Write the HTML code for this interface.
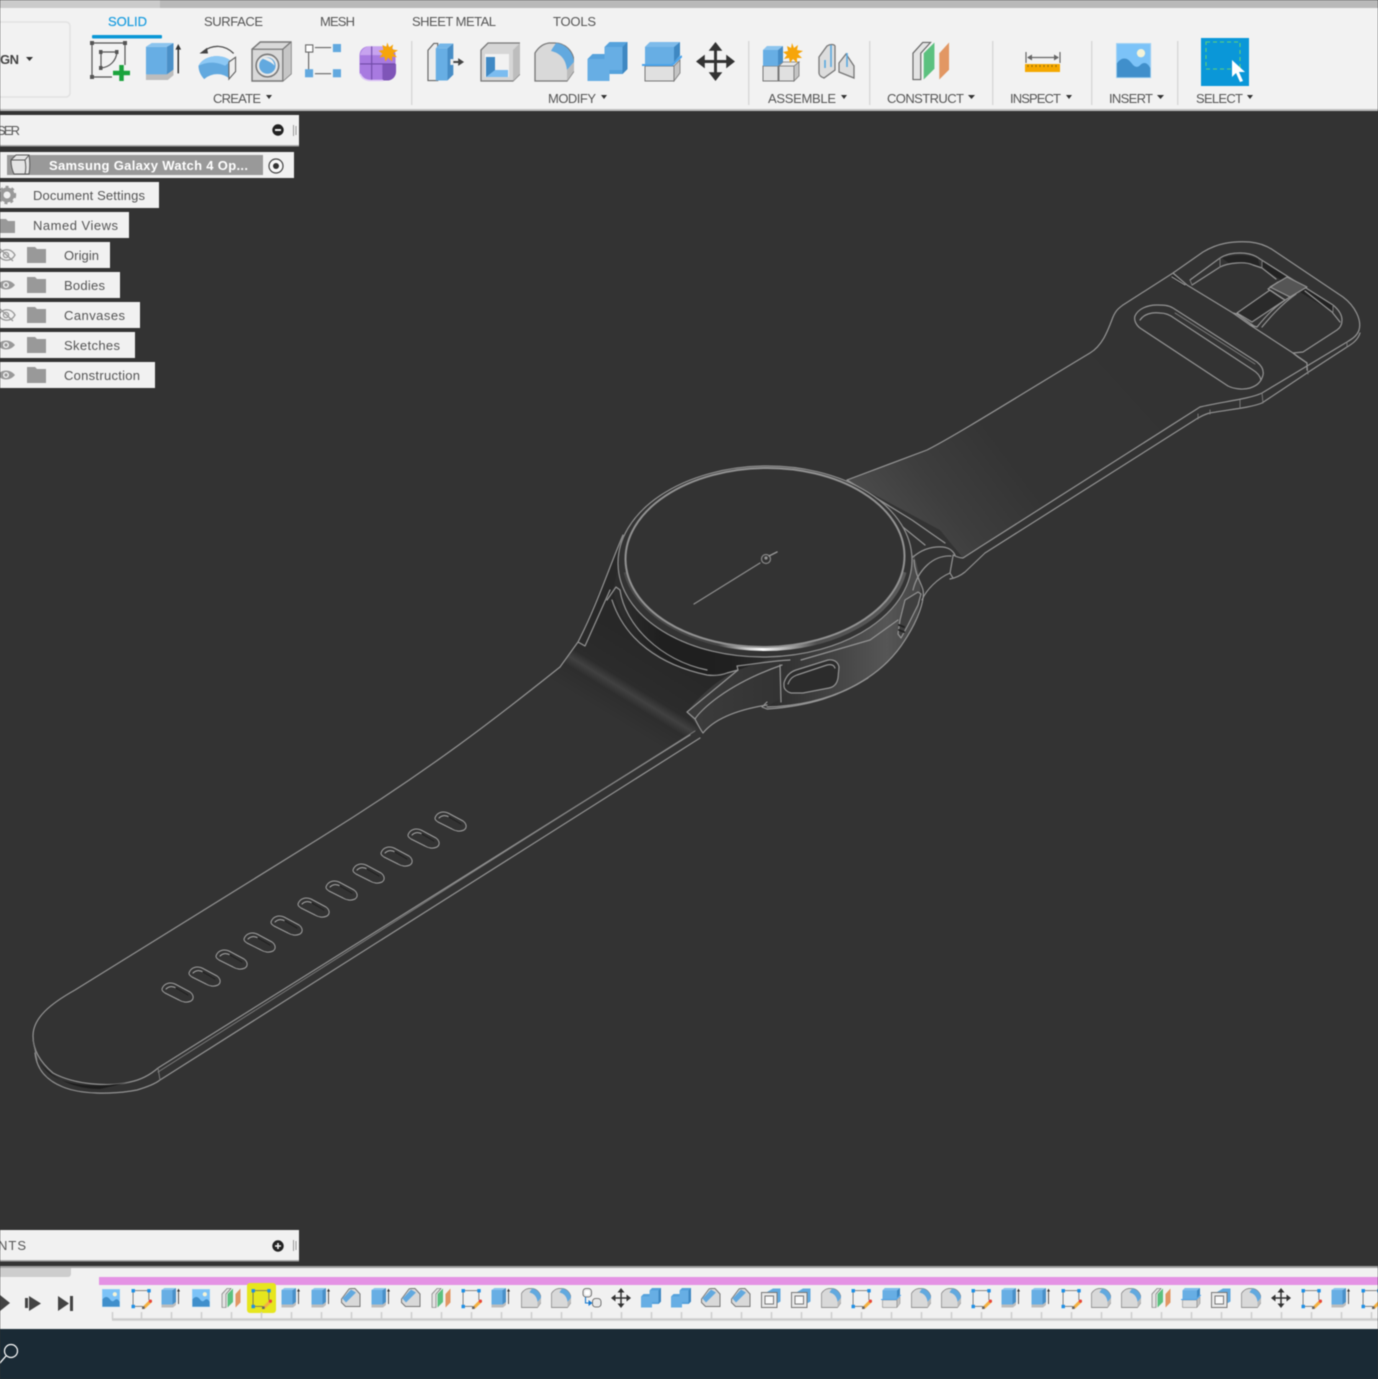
<!DOCTYPE html>
<html lang="en"><head><meta charset="utf-8"><title>Samsung Galaxy Watch 4</title>
<style>
html,body{margin:0;padding:0;width:1378px;height:1379px;overflow:hidden;background:#333}
svg{display:block;position:absolute;left:0;top:0;filter:blur(.45px)}
text{font-family:"Liberation Sans",sans-serif;font-size:13px;fill:#555}
.w{fill:none;stroke:#949494;stroke-width:1.2;stroke-linejoin:round;stroke-linecap:round}
.t{stroke:#808080;stroke-width:.9}
</style></head><body>
<svg width="1378" height="1379" viewBox="0 0 1378 1379" xmlns="http://www.w3.org/2000/svg">
<defs>
<linearGradient id="gBody" x1="620" x2="910" y1="0" y2="0" gradientUnits="userSpaceOnUse"><stop offset="0" stop-color="#2d2d2d"/><stop offset=".14" stop-color="#1f1f1f"/><stop offset=".38" stop-color="#202020"/><stop offset=".55" stop-color="#303030"/><stop offset=".92" stop-color="#565656"/><stop offset="1" stop-color="#4a4a4a"/></linearGradient>
<linearGradient id="gRim" x1="640" x2="900" y1="0" y2="0" gradientUnits="userSpaceOnUse"><stop offset="0" stop-color="#4a4a4a"/><stop offset=".3" stop-color="#454545"/><stop offset=".41" stop-color="#ccc"/><stop offset=".47" stop-color="#fff"/><stop offset=".55" stop-color="#bbb"/><stop offset=".68" stop-color="#4f4f4f"/><stop offset="1" stop-color="#5a5a5a"/></linearGradient>
<linearGradient id="gStrapU" x1="880" y1="530" x2="1000" y2="440" gradientUnits="userSpaceOnUse"><stop offset="0" stop-color="#4c4c4c"/><stop offset=".45" stop-color="#3e3e3e"/><stop offset="1" stop-color="#343434"/></linearGradient>
<linearGradient id="gStrapL" x1="660" y1="650" x2="605" y2="740" gradientUnits="userSpaceOnUse"><stop offset="0" stop-color="#282828"/><stop offset=".42" stop-color="#2c2c2c"/><stop offset=".5" stop-color="#414141"/><stop offset=".58" stop-color="#2e2e2e"/><stop offset=".78" stop-color="#333"/></linearGradient>
<linearGradient id="gLug" x1="700" x2="780" y1="0" y2="0" gradientUnits="userSpaceOnUse"><stop offset="0" stop-color="#3b3b3b"/><stop offset="1" stop-color="#333"/></linearGradient>

<symbol id="extrude" viewBox="0 0 40 40"><path d="M1 33v6l23 0 6-5v-6z" fill="#bdbdbd"/><path d="M1 4h22v29H1z" fill="#67aee4"/><path d="M23 4l7-4v28l-7 5z" fill="#4a90c8"/><path d="M1 4l6-4h23l-7 4z" fill="#8cc4ee"/><path d="M35 32V4" stroke="#333" stroke-width="1.6"/><path d="M32 7l3-6 3 6z" fill="#333"/></symbol>
<symbol id="revolve" viewBox="0 0 40 40"><path d="M0 24C6 12 26 11 34 19l-1 19C26 31 14 31 6 38 2 34 0 29 0 24z" fill="#62a9df"/><path d="M0 24C6 12 26 11 34 19L28 24C20 20 10 19 0 24z" fill="#8cc8f4"/><path d="M32 20l7-5v15l-7 8z" fill="#eee" stroke="#666" stroke-width="1.2"/><path d="M5 9C15 1 28 2 37 11" fill="none" stroke="#444" stroke-width="1.3"/><path d="M1 11l8-6 1 6z" fill="#444"/></symbol>
<symbol id="hole" viewBox="0 0 40 40"><path d="M1 8l8-7h30v31l-8 7H1z" fill="#d9d9d9" stroke="#777" stroke-width="1.4"/><path d="M31 8l8-7v31l-8 7z" fill="#c6c6c6"/><path d="M1 8h30l8-7M31 8v31" fill="none" stroke="#777" stroke-width="1.2"/><circle cx="16" cy="24" r="11" fill="#e8e8e8" stroke="#777" stroke-width="1.5"/><circle cx="16" cy="24" r="8" fill="#62a9df"/><path d="M11 17c5-2 11 0 12 7-4-4-8-5-12-7z" fill="#eee"/></symbol>
<symbol id="pattern" viewBox="0 0 40 40"><path d="M4 9v20M11 4h18M11 33h18" stroke="#666" stroke-width="1.3"/><rect x="0.7" y="1" width="8" height="8" fill="#fff" stroke="#666" stroke-width="1.2"/><rect x="31" y="0" width="9" height="9" fill="#62a9df"/><rect x="0" y="28" width="9" height="9" fill="#62a9df"/><rect x="31" y="28" width="9" height="9" fill="#62a9df"/></symbol>
<symbol id="form" viewBox="0 0 40 40"><rect x="0.5" y="4" width="37" height="35" rx="9" fill="#a87ae0"/><path d="M24 22h14v8c0 5-4 9-9 9h-5z" fill="#7f55b8"/><path d="M1 13c1-5 5-9 10-9h14v9z" fill="#c7a3ef"/><path d="M13 4v35M1 22h36" stroke="#6f4aa6" stroke-width="1.1"/><path d="M1 32c3 6 7 7 12 7h12" stroke="#ddc8f5" fill="none" stroke-width="1.5"/><path d="M29 0l2 5 4-3-1 5 6 1-5 3 4 4-5-.5 0 5-4-4-3 4-1-5-5 1 3-4-4-3 5-1-1-5 4 2z" fill="#f6a50a"/></symbol>
<symbol id="press" viewBox="0 0 40 40"><path d="M1 8l6-7h4v38H1z" fill="#ececec" stroke="#666" stroke-width="1.2"/><rect x="9" y="6" width="12" height="33" fill="#67aee4"/><path d="M9 6l4-5h14l-6 5z" fill="#74b6e8"/><path d="M21 6l6-5v32l-6 6z" fill="#478dc6"/><path d="M24 20h9" stroke="#444" stroke-width="2"/><path d="M32 16l6 4-6 4z" fill="#444"/><rect x="24" y="17" width="3" height="6" fill="#eee"/></symbol>
<symbol id="shell" viewBox="0 0 40 40"><path d="M1 8l7-7h32v31l-7 7H1z" fill="#d6d6d6" stroke="#777" stroke-width="1.3"/><path d="M33 8l7-7v31l-7 7z" fill="#bdbdbd"/><rect x="5" y="12" width="24" height="23" fill="#f2f2f2"/><path d="M6 15h9v13h13v7H6z" fill="#7bbcf0"/><path d="M6 15h9v13L6 35z" fill="#4089c4"/></symbol>
<symbol id="fillet" viewBox="0 0 40 40"><path d="M1 11C4 6 8 2 15 1h6c10 0 18 8 19 18v10l-7 10H1z" fill="#d9d9d9" stroke="#777" stroke-width="1.3"/><path d="M17 9c2-4 4-6 5-8 10 1 17 9 18 19l-7 8C32 17 26 11 17 9z" fill="#62a9df"/><path d="M33 28l7-8v9l-7 10z" fill="#bcbcbc"/></symbol>
<symbol id="chamfer" viewBox="0 0 40 40"><path d="M1 22L16 2c2-1 4-1 6-1h6l10 11v25H9l-8-8z" fill="#d9d9d9" stroke="#777" stroke-width="2"/><path d="M3 21L20 3l10 6-20 20z" fill="#62a9df"/></symbol>
<symbol id="combine" viewBox="0 0 40 40"><path d="M0 17l5-5h12V5l5-5h18v27l-5 5H22v7H0z" fill="#56a2dc"/><path d="M17 5h18v23H22v11H0V17h17z" fill="#67aee4"/><path d="M35 5l5-5v27l-5 5z" fill="#3f88c2"/></symbol>
<symbol id="split" viewBox="0 0 40 40"><path d="M3 5l5-5h30v15l-6 8H3z" fill="#67aee4"/><path d="M32 5l6-5v13l-6 7z" fill="#3f88c2"/><path d="M3 5l5-5h30l-6 5z" fill="#7ebbea"/><path d="M3 24h29v15H3z" fill="#e0e0e0" stroke="#777"/><path d="M32 24l6-6v13l-6 8z" fill="#c4c4c4" stroke="#777" stroke-width=".8"/><path d="M0 23h30l10-9" fill="none" stroke="#4ba3ea" stroke-width="2"/></symbol>
<symbol id="move" viewBox="0 0 40 40"><path d="M20 4v32M4 20h32" stroke="#333" stroke-width="3"/><path d="M20 0l7 9H13zM20 40l7-9H13zM0 20l9-7v14zM40 20l-9-7v14z" fill="#333"/></symbol>
<symbol id="construct" viewBox="0 0 40 40"><path d="M1 12L11 1h8L9 12v27H1z" fill="#e3e3e3" stroke="#666" stroke-width="1.2"/><path d="M12 12L23 1v27L12 39z" fill="#5cc17f"/><path d="M28 12L38 1v28L28 39z" fill="#e29763"/></symbol>
<symbol id="insert" viewBox="0 0 40 40"><rect x="0.5" y="0.5" width="37" height="37" fill="#7cc3f8" stroke="#a8d4f2"/><circle cx="27" cy="11" r="4.5" fill="#f3f3d8"/><path d="M1 37V22c5-7 11-7 16 0 3 4 6 5 9 2 4-4 8-3 11 3v10z" fill="#408fcb"/></symbol>
<symbol id="sk" viewBox="0 0 40 40"><path d="M4 5h30M34 5v18M4 5v30M4 35h18" fill="none" stroke="#666" stroke-width="1.5"/><g fill="#1b8fe8"><rect x="1" y="2" width="6.500" height="6.500"/><rect x="31" y="2" width="6.500" height="6.500"/><rect x="1" y="32" width="6.500" height="6.500"/></g><path d="M22 36l13-13 5 4-13 12-6 1z" fill="#f4b040"/><circle cx="37" cy="25" r="3.200" fill="#e8453c"/><rect x="21" y="35" width="5" height="5" fill="#666"/></symbol>
<symbol id="tshell" viewBox="0 0 40 40"><path d="M12 8l12-7h15v26l-7 4V8z" fill="#62a9df"/><rect x="1" y="9" width="31" height="30" fill="#e8e8e8" stroke="#777" stroke-width="2"/><rect x="8" y="16" width="17" height="16" fill="#f8f8f8" stroke="#777" stroke-width="2"/></symbol>
<symbol id="group" viewBox="0 0 40 40"><rect x="3" y="1" width="17" height="17" rx="6" fill="#e8e8e8" stroke="#555" stroke-width="1.6"/><rect x="22" y="21" width="17" height="17" rx="6" fill="#e8e8e8" stroke="#555" stroke-width="1.6"/><path d="M8 18v12h10" fill="none" stroke="#1679d0" stroke-width="2.2"/><path d="M14 24l8 6-8 6z" fill="#1679d0"/><rect x="7" y="5" width="9" height="9" rx="3" fill="#fff"/></symbol>
</defs>

<!-- VIEWPORT -->
<rect width="1378" height="1379" fill="#333"/>

<!-- upper strap -->
<path d="M847 480L927 450C960 433 1020 395 1090 353L1160 430 1200 407 980 547 963 558 940 530z" fill="url(#gStrapU)"/>
<!-- lower strap -->
<path d="M623 535L578 642 560 667C500 715 430 770 320 838L160 1000 158 1068 690 735 700 728 760 650z" fill="url(#gStrapL)"/>

<g class="w">
<!-- upper strap outlines -->
<path d="M847 480L927 450C960 433 1020 395 1090 353 1103 345 1108 330 1113 317 1116 310 1119 308 1123 305L1173 273 1203 252C1218 243 1232 241 1250 242 1260 243 1267 246 1273 250L1343 297C1355 306 1362 320 1359 330 1357 336 1352 339 1347 342L1262 393C1250 399 1220 402 1200 407L980 547 963 558C960 558 957 557 953 555"/>
<path d="M1360 333C1358 340 1352 344 1347 347L1307 373 1262 403C1250 408 1225 410 1210 413 1205 414 1202 416 1198 418L985 553 965 572C960 576 955 578 950 579"/>
<path class="t" d="M1347 342v5M1307 365l1 9M1262 393l1 10M1240 400l0 8M1210 410v4M1198 414v5"/>
<!-- buckle -->
<path d="M1222 258c10-3 24-5 36 1l2 8c-10-5-20-5-30-3z" fill="#242424" stroke="none"/>
<path d="M1263 260l70 45-1 7-70-44z" fill="#222" stroke="none"/>
<path d="M1173 277l12 8" stroke="#222" stroke-width="3"/>
<path d="M1173 273l14 12 46 28 17 12 43 28 14 10"/>
<path d="M1172 277l13 8"/>
<path d="M1190 280L1220 258C1226 254 1233 253 1240 253 1248 253 1255 255 1260 259L1333 305C1339 310 1342 315 1342 320 1342 325 1340 328 1337 330L1303 352 1293 353"/>
<path d="M1192 285L1220 267C1228 263 1245 261 1253 265L1262 268 1276 279M1305 291L1332 312 1340 322"/>
<path class="t" d="M1190 280l2 5M1220 258v9M1262 260v8M1333 305v7"/>
<path d="M1233 313l4 1 17 12"/>
<path d="M1293 353l5 4 9 6 0 7"/>
<path d="M1237 313L1270 290 1285 300 1252 322z" fill="#2a2a2a"/>
<path d="M1270 287L1287 277 1307 287 1290 297z" fill="#555"/>
<path d="M1290 297C1275 306 1266 316 1257 327L1250 325M1278 282l-10 7 15 10"/>
<path d="M1296 294C1282 304 1272 315 1262 327"/>
<!-- slot -->
<path d="M1173 308L1257 362C1262 366 1264 370 1263 375 1261 383 1256 386 1250 388 1243 390 1234 389 1228 386L1140 328C1135 324 1134 319 1135 316 1138 309 1147 305 1157 305 1163 305 1168 305 1173 308z"/>
<path d="M1140 320C1144 314 1152 312 1160 313 1166 313 1170 315 1174 318L1253 370C1258 373 1260 376 1261 380"/>
<path class="t" d="M1175 313L1255 364"/>

<!-- lower strap outlines -->
<path d="M623 535C610 565 597 605 578 642L560 667C500 715 430 770 320 838L75 990C50 1004 33 1018 33 1036 33 1050 40 1062 53 1073 75 1085 110 1087 130 1082 140 1080 150 1075 158 1068L690 735"/>
<path d="M35 1053C37 1072 50 1082 63 1087 80 1094 110 1095 137 1090 147 1087 155 1084 160 1080L700 738"/>
<path class="t" d="M158 1068l2 12M33 1040l4 20M158 1072L695 731"/>
<path d="M40 1063C50 1078 65 1083 85 1085 105 1086 120 1084 130 1082L100 1089C75 1089 55 1080 40 1063z" fill="#1d1d1d" stroke="none"/>
</g>

<!-- watch body -->
<path d="M613 590C620 625 650 662 707 675L780 665 790 692 767 707C830 705 880 680 905 640 922 615 925 590 914 555L620 560z" fill="url(#gBody)"/>
<path d="M687 712C700 695 720 678 738 670L780 655 782 698 767 705C745 708 725 712 703 733z" fill="url(#gLug)"/>
<g class="w">
<path d="M612 600C625 640 660 665 707 675 715 676 722 675 727 673L738 670"/>
<path d="M607 600L616 587 620 590C625 625 660 660 707 670"/>
<path d="M578 642L585 646 610 590"/>
<path d="M687 712L738 670 737 666C755 664 770 661 790 660M687 712L695 719M695 719C700 711 725 685 782 665"/>
<path d="M695 719C698 725 700 729 703 733 712 722 730 711 767 705"/>
<path d="M767 707C830 705 880 680 905 640 918 620 925 600 923 590 921 582 915 575 914 560"/>
<path d="M767 702L762 707 767 709C810 706 840 696 868 678"/>
<path d="M780 665L781 702M801 660L870 640 898 620"/>
<path d="M913 557C920 551 930 546 943 547 950 548 953 551 955 555"/>
<path d="M913 590C918 570 933 555 951 556"/>
<path d="M950 573C938 578 926 590 922 600"/>
<path d="M953 556L950 573 953 578"/>
<path d="M847 480L912 520 945 543M850 484L925 545"/>
<!-- button -->
<path d="M784 683C786 676 790 672 796 670L828 660C834 659 838 662 839 667L838 678C837 684 834 687 829 688L803 693 791 693C787 692 784 689 784 686z" fill="#2c2c2c"/>
<path d="M788 684C790 679 792 677 797 675L827 665C831 664 834 665 835 668"/>
<!-- side buttons -->
<path d="M898 634L900 620 905 600 918 592 921 594 918 605 908 625 901 638z" fill="#3f3f3f"/>
<path d="M899 625l5 2M899 630l5 2" stroke="#222" stroke-width="2"/>
</g>

<!-- bezel & face -->
<ellipse cx="765" cy="561.500" rx="147" ry="95.500" transform="rotate(-1 765 561)" fill="#333" stroke="#909090" stroke-width="1.200"/>
<path d="M626 572A141 92 0 0 0 904 572" fill="none" stroke="url(#gRim)" stroke-width="5"/>
<ellipse cx="765" cy="557.500" rx="139.500" ry="89.500" transform="rotate(-1 765 558)" fill="#333" stroke="#929292" stroke-width="2"/>
<g class="w">
<path d="M694 604L760 563" stroke="#8f8f8f"/>
<circle cx="766" cy="559" r="4.500" stroke="#888"/><circle cx="766" cy="558" r="1" fill="#888"/>
<path d="M769 556L777 552" stroke="#999" stroke-width="1.400"/>
</g>

<!-- strap holes -->
<g class="w t" style="stroke:#a0a0a0;stroke-width:1">
<g id="h0" transform="translate(177 992)"><path d="M-15-3C-13-9-7-10-2-8L13 0C17 3 17 7 14 9 10 11 5 10 2 8L-12 1C-15-1-15-2-15-3z"/><path d="M-11-3C-8-6-4-6-1-4" stroke="#aaa"/><path d="M-1-4L11 3" stroke="#222" stroke-width="1.200"/></g>
<use href="#h0" x="27" y="-16"/><use href="#h0" x="54" y="-33"/><use href="#h0" x="82" y="-50"/><use href="#h0" x="109" y="-67"/><use href="#h0" x="136" y="-85"/><use href="#h0" x="164" y="-102"/><use href="#h0" x="191" y="-119"/><use href="#h0" x="219" y="-136"/><use href="#h0" x="246" y="-154"/><use href="#h0" x="273" y="-171"/>
</g>

<!-- BROWSER -->
<g>
<rect x="0" y="115" width="299" height="31" fill="#f1f1f1"/><rect x="0" y="145" width="299" height="1.500" fill="#a5a5a5"/>
<text x="-3" y="135" textLength="23" lengthAdjust="spacing">SER</text>
<circle cx="278" cy="130" r="5.700" fill="#222"/><rect x="275" y="129" width="6" height="2" fill="#f1f1f1"/>
<path d="M293.500 125v11M296 126v9" stroke="#999"/>
<rect x="0" y="152" width="294" height="26" fill="#f1f1f1"/>
<rect x="7" y="155" width="256" height="20" fill="#999"/>
<path d="M11 160l5-5h13c1 6 1 13 0 19H14c-2-4-3-9-3-14z" fill="#e4e4e4" stroke="#555"/><path d="M11 160h14l4-5M25 160c1 5 1 10 0 14" fill="none" stroke="#555"/>
<text x="49" y="170" textLength="199" lengthAdjust="spacing" style="font-weight:bold;fill:#fff">Samsung Galaxy Watch 4 Op...</text>
<circle cx="276" cy="166" r="7" fill="#f8f8f8" stroke="#444" stroke-width="1.200"/><circle cx="276" cy="166" r="3" fill="#333"/>

<rect x="0" y="182" width="159" height="26" fill="#f1f1f1"/>
<text x="33" y="200" textLength="112" lengthAdjust="spacing">Document Settings</text>
<circle cx="7" cy="195" r="5.500" fill="none" stroke="#999" stroke-width="4"/><circle cx="7" cy="195" r="8" fill="none" stroke="#999" stroke-width="2.400" stroke-dasharray="3 3"/>
<rect x="0" y="212" width="129" height="26" fill="#f1f1f1"/>
<text x="33" y="230" textLength="85" lengthAdjust="spacing">Named Views</text>
<path d="M0 219h6l2 2h7v12H0z" fill="#999"/>
<rect x="0" y="242" width="110" height="26" fill="#f1f1f1"/>
<text x="64" y="260" textLength="35" lengthAdjust="spacing">Origin</text>
<rect x="0" y="272" width="120" height="26" fill="#f1f1f1"/>
<text x="64" y="290" textLength="41" lengthAdjust="spacing">Bodies</text>
<rect x="0" y="302" width="140" height="26" fill="#f1f1f1"/>
<text x="64" y="320" textLength="61" lengthAdjust="spacing">Canvases</text>
<rect x="0" y="332" width="135" height="26" fill="#f1f1f1"/>
<text x="64" y="350" textLength="56" lengthAdjust="spacing">Sketches</text>
<rect x="0" y="362" width="155" height="26" fill="#f1f1f1"/>
<text x="64" y="380" textLength="76" lengthAdjust="spacing">Construction</text>
<g fill="#999">
<path d="M27 248v-1h8l2 2h9v14H27z"/><path d="M27 278v-1h8l2 2h9v14H27z"/><path d="M27 308v-1h8l2 2h9v14H27z"/><path d="M27 338v-1h8l2 2h9v14H27z"/><path d="M27 368v-1h8l2 2h9v14H27z"/>
</g>
<g fill="none" stroke="#999" stroke-width="1.300">
<path d="M-2 255c5-7 13-7 17 0-4 7-12 7-17 0z"/><circle cx="6" cy="255" r="2.600"/><path d="M0 249l13 12"/>
<path d="M-2 315c5-7 13-7 17 0-4 7-12 7-17 0z"/><circle cx="6" cy="315" r="2.600"/><path d="M0 309l13 12"/>
</g>
<g><path d="M-3 285c5-6 13-6 18 0-5 6-13 6-18 0z" fill="#999"/><circle cx="6" cy="285" r="3" fill="#f1f1f1"/><circle cx="6" cy="285" r="1.600" fill="#999"/>
<path d="M-3 345c5-6 13-6 18 0-5 6-13 6-18 0z" fill="#999"/><circle cx="6" cy="345" r="3" fill="#f1f1f1"/><circle cx="6" cy="345" r="1.600" fill="#999"/>
<path d="M-3 375c5-6 13-6 18 0-5 6-13 6-18 0z" fill="#999"/><circle cx="6" cy="375" r="3" fill="#f1f1f1"/><circle cx="6" cy="375" r="1.600" fill="#999"/></g>

<rect x="0" y="1230" width="299" height="31" fill="#f1f1f1"/><rect x="0" y="1260" width="299" height="1.500" fill="#a5a5a5"/>
<text x="-2" y="1250" textLength="28" lengthAdjust="spacing">NTS</text>
<circle cx="278" cy="1246" r="5.700" fill="#222"/><path d="M275 1246h6M278 1243v6" stroke="#f1f1f1" stroke-width="1.600"/>
<path d="M293.500 1240v11M296 1241v9" stroke="#999"/>
</g>

<!-- TOP TOOLBAR -->
<rect x="0" y="0" width="160" height="8" fill="#cbcbcb"/><rect x="160" y="0" width="1218" height="8" fill="#b9b9b9"/>
<rect x="0" y="8" width="1378" height="102" fill="#f2f2f2"/><rect x="0" y="109" width="1378" height="2" fill="#bdbdbd"/>
<rect x="-10" y="22" width="80" height="75" rx="4" fill="#f2f2f2" stroke="#e2e2e2" stroke-width="1.500"/>
<text x="0" y="64" textLength="19" lengthAdjust="spacing" style="font-weight:bold;fill:#444">GN</text>
<path d="M26 57h7l-3.500 4z" fill="#333"/>
<text x="108" y="26" textLength="39" lengthAdjust="spacing" style="fill:#1f9fe0;stroke:#1f9fe0;stroke-width:.25">SOLID</text>
<text x="204" y="26" textLength="59" lengthAdjust="spacing">SURFACE</text>
<text x="320" y="26" textLength="35" lengthAdjust="spacing">MESH</text>
<text x="412" y="26" textLength="84" lengthAdjust="spacing">SHEET METAL</text>
<text x="553" y="26" textLength="43" lengthAdjust="spacing">TOOLS</text>
<rect x="92" y="35" width="70" height="3.500" rx="1" fill="#0a97d6"/>
<g fill="#d9d9d9"><rect x="411" y="41" width="1.500" height="64"/><rect x="748" y="41" width="1.500" height="64"/><rect x="869" y="41" width="1.500" height="64"/><rect x="992" y="41" width="1.500" height="64"/><rect x="1091" y="41" width="1.500" height="64"/><rect x="1177" y="41" width="1.500" height="64"/></g>
<text x="213" y="103" textLength="48" lengthAdjust="spacing">CREATE</text>
<text x="548" y="103" textLength="48" lengthAdjust="spacing">MODIFY</text>
<text x="768" y="103" textLength="68" lengthAdjust="spacing">ASSEMBLE</text>
<text x="887" y="103" textLength="77" lengthAdjust="spacing">CONSTRUCT</text>
<text x="1010" y="103" textLength="51" lengthAdjust="spacing">INSPECT</text>
<text x="1109" y="103" textLength="44" lengthAdjust="spacing">INSERT</text>
<text x="1196" y="103" textLength="47" lengthAdjust="spacing">SELECT</text>
<g fill="#333"><path d="M266 95h6l-3 4z"/><path d="M601 95h6l-3 4z"/><path d="M841 95h6l-3 4z"/><path d="M968 95h7l-3.500 4z"/><path d="M1066 95h6l-3 4z"/><path d="M1157 95h7l-3.500 4z"/><path d="M1247 95h6l-3 4z"/></g>

<!-- sketch icon -->
<g stroke="#555" fill="none" stroke-width="1.200"><path d="M92 43h33M92 43v34M92 77h20M125 43v22"/><path d="M101 52h16M101 52v16M101 68c9-1 15-7 16-16"/></g>
<g fill="#555"><rect x="90" y="41" width="4" height="4"/><rect x="123" y="41" width="4" height="4"/><rect x="90" y="75" width="4" height="4"/><rect x="99" y="66" width="3.500" height="4"/><rect x="99" y="50" width="3.500" height="4"/><rect x="115" y="50" width="3.500" height="4"/></g>
<path d="M121.500 65v16M113 73h17" stroke="#1aa33c" stroke-width="4.500"/>

<use href="#extrude" x="145" y="42" width="38" height="40"/>
<use href="#revolve" x="197" y="43" width="41" height="38"/>
<use href="#hole" x="251" y="41" width="41" height="41"/>
<use href="#pattern" x="305" y="44" width="36" height="36"/>
<use href="#form" x="359" y="42" width="39" height="40"/>
<use href="#press" x="427" y="42" width="39" height="40"/>
<use href="#shell" x="480" y="42" width="40" height="40"/>
<use href="#fillet" x="534" y="42" width="40" height="40"/>
<use href="#combine" x="587" y="42" width="41" height="40"/>
<use href="#split" x="642" y="42" width="40" height="40"/>
<use href="#move" x="696" y="42" width="39" height="39"/>
<!-- new component -->
<g><rect x="763" y="66" width="15" height="15" fill="#e0e0e0" stroke="#777"/><rect x="779" y="66" width="15" height="15" fill="#e0e0e0" stroke="#777"/><path d="M794 66l5-4v14l-5 5z" fill="#c4c4c4" stroke="#777" stroke-width=".8"/><path d="M779 66l4-4h16l-5 4z" fill="#e8e8e8" stroke="#777" stroke-width=".8"/><rect x="763" y="50" width="15" height="16" fill="#67aee4"/><path d="M763 50l4-4h16l-5 4z" fill="#8cc4ee"/><path d="M778 50l5-4v16l-5 4z" fill="#478dc6"/><path d="M792 43l2 5 4-3-1 5 6 1-5 3 4 4-5 0 0 5-4-4-3 4-1-5-5 1 3-4-4-3 5-1-1-5 4 2z" fill="#f6a50a"/></g>
<!-- joint -->
<g stroke="#777" stroke-width="1.300" fill="#ddd"><path d="M819 57l8-11c3-2 7-2 8 0v24l-11 8c-3-1-5-3-5-5z"/><path d="M839 63l7-9 8 12v12l-15-6z"/></g><path d="M831 45v22M847 53v14" stroke="#5aa9e0" stroke-width="1.600"/><path d="M825 60v8" stroke="#5aa9e0" stroke-width="1.600"/>
<use href="#construct" x="912" y="41" width="39" height="40"/>
<!-- measure -->
<path d="M1026 52v11M1060 52v11M1028 57.500h30" stroke="#666" stroke-width="1.200" fill="none"/><path d="M1027 57.500l5-3v6zM1059 57.500l-5-3v6z" fill="#666"/><rect x="1025" y="64" width="35" height="8" fill="#f5a800"/><path d="M1028 65v2M1032 65v2M1036 65v2M1040 65v2M1044 65v2M1048 65v2M1052 65v2M1056 65v2" stroke="#8a6a10"/>
<use href="#insert" x="1116" y="43" width="37" height="37"/>
<rect x="1201" y="38" width="48" height="48" fill="#0a97d8"/><rect x="1206" y="42" width="34" height="27" fill="none" stroke="#5fd07a" stroke-width="1.100" stroke-dasharray="4 3"/><path d="M1232 60v17l4-4 4 9 3-1-4-9h6z" fill="#fff"/>

<!-- TIMELINE -->
<rect x="0" y="1266" width="1378" height="2" fill="#a0a0a0"/>
<rect x="0" y="1268" width="1378" height="61" fill="#f1f1f1"/>
<path d="M0 1268h71v6a3 3 0 0 1-3 3H0z" fill="#cdcdcd"/>
<rect x="99" y="1277" width="1279" height="8" fill="#e492e4"/>
<path d="M0 1295l10 8-10 8z" fill="#444"/>
<rect x="25" y="1298" width="3" height="10" fill="#444"/><path d="M29 1296l12 7.500-12 7.500z" fill="#444"/>
<path d="M58 1296l11 7.500-11 7.500z" fill="#444"/><rect x="70" y="1296" width="3" height="15" fill="#444"/>
<rect x="247" y="1283" width="29" height="30" rx="3" fill="#e6e61e"/>
<path d="M112 1319.500H1378" stroke="#cdcdcd" stroke-width="2.500"/>
<path d="M112.500 1312v7M141.500 1312v7M171.500 1312v7M201.500 1312v7M231.500 1312v7M261.500 1312v7M291.500 1312v7M321.500 1312v7M351.500 1312v7M381.500 1312v7M411.500 1312v7M441.500 1312v7M471.500 1312v7M501.500 1312v7M531.500 1312v7M561.500 1312v7M591.500 1312v7M621.500 1312v7M651.500 1312v7M681.500 1312v7M711.500 1312v7M741.500 1312v7M771.500 1312v7M801.500 1312v7M831.500 1312v7M861.500 1312v7M891.500 1312v7M921.500 1312v7M951.500 1312v7M981.500 1312v7M1011.500 1312v7M1041.500 1312v7M1071.500 1312v7M1101.500 1312v7M1131.500 1312v7M1161.500 1312v7M1191.500 1312v7M1221.500 1312v7M1251.500 1312v7M1281.500 1312v7M1311.500 1312v7M1341.500 1312v7M1371.500 1312v7" stroke="#cdcdcd" stroke-width="1.500"/>
<g>
<use href="#insert" x="102" y="1289" width="19" height="19"/><use href="#sk" x="131" y="1288" width="21" height="21"/><use href="#extrude" x="161" y="1288" width="20" height="20"/><use href="#insert" x="192" y="1289" width="19" height="19"/><use href="#construct" x="221" y="1288" width="21" height="20"/><use href="#sk" x="251" y="1288" width="21" height="21"/><use href="#extrude" x="281" y="1288" width="20" height="20"/><use href="#extrude" x="311" y="1288" width="20" height="20"/><use href="#chamfer" x="341" y="1288" width="20" height="20"/><use href="#extrude" x="371" y="1288" width="20" height="20"/><use href="#chamfer" x="401" y="1288" width="20" height="20"/><use href="#construct" x="431" y="1288" width="21" height="20"/><use href="#sk" x="461" y="1288" width="21" height="21"/><use href="#extrude" x="491" y="1288" width="20" height="20"/><use href="#fillet" x="521" y="1288" width="20" height="20"/><use href="#fillet" x="551" y="1288" width="20" height="20"/><use href="#group" x="581" y="1288" width="21" height="20"/><use href="#move" x="611" y="1288" width="20" height="20"/><use href="#combine" x="641" y="1288" width="20" height="20"/><use href="#combine" x="671" y="1288" width="20" height="20"/><use href="#chamfer" x="701" y="1288" width="20" height="20"/><use href="#chamfer" x="731" y="1288" width="20" height="20"/><use href="#tshell" x="761" y="1288" width="20" height="20"/><use href="#tshell" x="791" y="1288" width="20" height="20"/><use href="#fillet" x="821" y="1288" width="20" height="20"/><use href="#sk" x="851" y="1288" width="21" height="21"/><use href="#split" x="881" y="1288" width="20" height="20"/><use href="#fillet" x="911" y="1288" width="20" height="20"/><use href="#fillet" x="941" y="1288" width="20" height="20"/><use href="#sk" x="971" y="1288" width="21" height="21"/><use href="#extrude" x="1001" y="1288" width="20" height="20"/><use href="#extrude" x="1031" y="1288" width="20" height="20"/><use href="#sk" x="1061" y="1288" width="21" height="21"/><use href="#fillet" x="1091" y="1288" width="20" height="20"/><use href="#fillet" x="1121" y="1288" width="20" height="20"/><use href="#construct" x="1151" y="1288" width="21" height="20"/><use href="#split" x="1181" y="1288" width="20" height="20"/><use href="#tshell" x="1211" y="1288" width="20" height="20"/><use href="#fillet" x="1241" y="1288" width="20" height="20"/><use href="#move" x="1271" y="1288" width="20" height="20"/><use href="#sk" x="1301" y="1288" width="21" height="21"/><use href="#extrude" x="1331" y="1288" width="20" height="20"/><use href="#sk" x="1361" y="1288" width="21" height="21"/>
</g>

<!-- TASKBAR -->
<rect x="0" y="1329" width="1378" height="50" fill="#1a2a35"/>
<circle cx="11" cy="1351" r="6.500" fill="none" stroke="#fff" stroke-width="1.200"/><path d="M6 1356l-7 8" stroke="#fff" stroke-width="1.300"/>
</svg>
</body></html>
